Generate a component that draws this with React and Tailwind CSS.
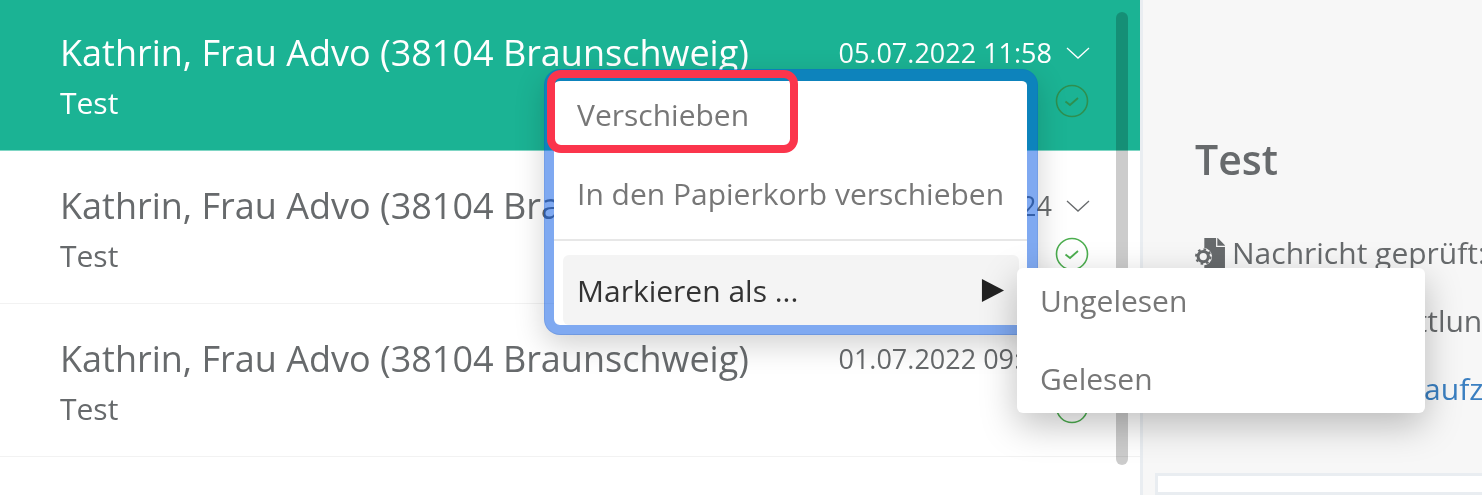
const rows = [
  { date: "05.07.2022 11:58", active: true },
  { date: "04.07.2022 10:24" },
  { date: "01.07.2022 09:12" },
];

function Chevron({ className }) {
  return (
    <svg viewBox="0 0 24 12" fill="none" stroke="currentColor" strokeWidth="1.3" className={className}>
      <path d="M1 1l11 10L23 1" />
    </svg>
  );
}

function CheckCircle({ className }) {
  return (
    <svg viewBox="0 0 34 34" fill="none" stroke="currentColor" className={className}>
      <circle cx="17" cy="17" r="15.5" strokeWidth="1.6" />
      <path d="M10.5 17.5l4.5 3.5 8-7" strokeWidth="1.8" />
    </svg>
  );
}

function FileGear({ className }) {
  return (
    <svg viewBox="0 0 30 30" className={className}>
      <path d="M9 0h13l7 7v23H9z" fill="#676a6c" />
      <path d="M21 0v8h8" fill="none" stroke="#f7f7f7" strokeWidth="1.2" />
      <circle cx="8" cy="18" r="8.5" fill="#f7f7f7" />
      <circle cx="8" cy="18" r="5" fill="none" stroke="#676a6c" strokeWidth="3" />
      <circle cx="8" cy="18" r="7" fill="none" stroke="#676a6c" strokeWidth="2" strokeDasharray="2.5 3" />
    </svg>
  );
}

function Row({ date, active }) {
  return (
    <div
      className={`flex h-[153px] shrink-0 border-b pl-[60px] pr-[50px] ${
        active ? "border-[#7fd6c4] bg-[#1bb394] text-white" : "border-[#f2f2f2] bg-white text-[#676a6c]"
      }`}
    >
      <div className="flex-1 pt-[34px]">
        <div className="text-[36px] leading-[41px] whitespace-nowrap">Kathrin, Frau Advo (38104 Braunschweig)</div>
        <div className="mt-[12px] text-[30px] leading-[36px]">Test</div>
      </div>
      <div className="flex flex-col items-end pt-[38px]">
        <div className="flex items-center gap-[14px]">
          <span className="text-[27px] leading-[34px] whitespace-nowrap">{date}</span>
          <Chevron className="h-[12px] w-[24px]" />
        </div>
        <CheckCircle className={`mr-[1px] mt-[14px] size-[34px] ${active ? "text-[#2f8f4f]" : "text-[#4cae4f]"}`} />
      </div>
    </div>
  );
}

function ContextMenu() {
  return (
    <div className="absolute left-[544px] top-[69px] z-10 h-[266px] w-[494px] rounded-[16px] border-[11px] border-b-[10px] border-l-[10px] border-t-[12px] border-[#0053e3]/50 bg-white bg-clip-padding text-[30px] text-[#777777] shadow-[0_10px_30px_rgba(0,0,0,0.18)]">
      <div className="flex h-[67px] items-center pl-[23px]">Verschieben</div>
      <div className="flex h-[91px] items-center whitespace-nowrap pl-[23px]">In den Papierkorb verschieben</div>
      <div className="border-t-2 border-[#e7e7e7]" />
      <div className="ml-[9px] mr-[8px] mt-[14px] flex h-[70px] items-center justify-between rounded-[6px] bg-[#f4f4f4] pl-[14px] pr-[14px] text-[#333333]">
        <span>Markieren als ...</span>
        <svg viewBox="0 0 24 26" className="size-[25px]" fill="#222222">
          <path d="M1 1l23 12L1 25z" />
        </svg>
      </div>
      {/* Rote Markierung */}
      <div className="absolute left-[-7px] top-[-11px] h-[83px] w-[251px] rounded-[14px] border-[8px] border-[#fb354c]" />
      {/* Untermenue */}
      <div className="absolute left-[463px] top-[187px] flex h-[145px] w-[408px] flex-col gap-[38px] rounded-[6px] bg-white pl-[23px] pt-[13px] leading-[40px] shadow-[0_12px_36px_rgba(0,0,0,0.25)]">
        <div>Ungelesen</div>
        <div>Gelesen</div>
      </div>
    </div>
  );
}

export default function App() {
  return (
    <div className="relative flex h-[495px] w-[1482px] overflow-hidden bg-white font-['Open_Sans',sans-serif] blur-[0.7px]">
      <div className="relative flex w-[1140px] shrink-0 flex-col">
        <div className="mt-[-2px] flex flex-col">
          {rows.map((r) => (
            <Row key={r.date} {...r} />
          ))}
        </div>
        <div className="absolute left-[1116px] top-[12px] h-[453px] w-[12px] rounded-full bg-black/20" />
      </div>

      <div className="flex flex-1 flex-col border-l-[3px] border-[#e9edf1] bg-[#f7f7f7] pl-[52px] text-[#676a6c]">
        <h2 className="mt-[135px] text-[41px] font-semibold leading-[48px]">Test</h2>
        <div className="mt-[51px] flex flex-col gap-[30px] text-[30px] leading-[38px] whitespace-nowrap">
          <div className="flex items-center gap-[6px]">
            <FileGear className="size-[31px]" />
            <span>Nachricht geprüft:</span>
          </div>
          <div className="pl-[37px]">Nach Übermittlung</div>
          <div className="ml-[-6px] text-[#3a7fc1]">Protokoll erneut aufzeichnen</div>
        </div>
        <div className="mt-[65px] ml-[-40px] h-[40px] border-[3px] border-[#e9edf1] bg-white" />
      </div>

      <ContextMenu />
    </div>
  );
}
